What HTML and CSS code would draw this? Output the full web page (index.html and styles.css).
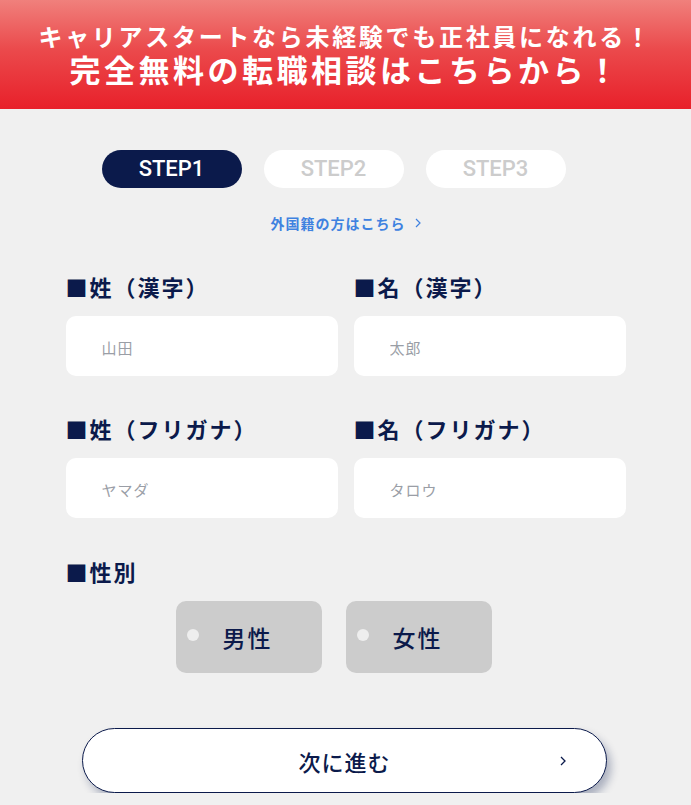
FILE: index.html
```html
<!DOCTYPE html>
<html lang="ja">
<head>
  <meta charset="UTF-8">
  <meta name="viewport" content="width=device-width, initial-scale=1.0">
  <title>無料転職相談</title>
  <link rel="stylesheet" href="styles.css">
</head>
<body>
  <header class="banner">
    <p class="banner-sub">キャリアスタートなら未経験でも正社員になれる！</p>
    <p class="banner-main">完全無料の転職相談はこちらから！</p>
  </header>

  <main class="form-wrap">
    <div class="steps">
      <span class="step active">STEP1</span>
      <span class="step">STEP2</span>
      <span class="step">STEP3</span>
    </div>

    <a class="foreign-link" href="#">外国籍の方はこちら
      <svg class="chev" width="6" height="10" viewBox="0 0 6 10"><path d="M1 1l4 4-4 4" fill="none" stroke="currentColor" stroke-width="1.2"/></svg>
    </a>

    <div class="fields">
      <div class="field">
        <label class="label">■姓（漢字）</label>
        <input class="input" type="text" placeholder="山田">
      </div>
      <div class="field">
        <label class="label">■名（漢字）</label>
        <input class="input" type="text" placeholder="太郎">
      </div>
      <div class="field">
        <label class="label">■姓（フリガナ）</label>
        <input class="input" type="text" placeholder="ヤマダ">
      </div>
      <div class="field">
        <label class="label">■名（フリガナ）</label>
        <input class="input" type="text" placeholder="タロウ">
      </div>
    </div>

    <div class="gender">
      <label class="label">■性別</label>
      <div class="radios">
        <label class="radio"><span class="dot"></span>男性</label>
        <label class="radio"><span class="dot"></span>女性</label>
      </div>
    </div>

    <button class="next" type="button">次に進む
      <svg class="next-arrow" width="8" height="12" viewBox="0 0 8 12"><path d="M2 2l4 4-4 4" fill="none" stroke="currentColor" stroke-width="1.3"/></svg>
    </button>
  </main>
</body>
</html>
```

FILE: styles.css
```css
* {
  margin: 0;
  padding: 0;
  box-sizing: border-box;
}

body {
  background-color: #f0f0f0;
  font-family: 'Noto Sans CJK JP', 'Noto Sans', sans-serif;
  color: #0b1a4b;
}

.banner {
  height: 109px;
  padding-top: 21px;
  background: linear-gradient(180deg, #f0807c 0%, #eb4a4c 45%, #e8202a 100%);
  color: white;
  text-align: center;
  font-weight: bold;
}

.banner-sub {
  font-size: 24px;
  line-height: 30px;
  letter-spacing: 2.7px;
}

.banner-main {
  font-size: 31px;
  line-height: 36px;
  letter-spacing: 3.5px;
}

.form-wrap {
  width: 560px;
  margin: 0 auto;
  display: flex;
  flex-direction: column;
}

.steps {
  display: flex;
  gap: 22px;
  margin-top: 41px;
  padding-left: 36px;
}

.step {
  width: 140px;
  height: 38px;
  border-radius: 19px;
  background-color: white;
  color: #cccccc;
  font-family: 'Roboto', sans-serif;
  font-weight: 500;
  font-size: 22px;
  line-height: 38px;
  text-align: center;
}

.step.active {
  background-color: #0b1a4b;
  color: white;
}

.foreign-link {
  display: flex;
  align-items: center;
  align-self: center;
  margin-top: 25px;
  color: #3f82e0;
  font-size: 14px;
  font-weight: bold;
  line-height: 20px;
  letter-spacing: 1px;
  text-decoration: none;
}

.chev {
  margin-left: 9px;
}

.fields {
  display: grid;
  grid-template-columns: 1fr 1fr;
  column-gap: 16px;
  row-gap: 38px;
  margin-top: 39px;
}

.label {
  display: block;
  font-size: 22px;
  font-weight: bold;
  line-height: 28px;
  letter-spacing: 2px;
  margin-bottom: 16px;
}

.input {
  display: block;
  width: 100%;
  height: 60px;
  border: none;
  border-radius: 10px;
  background-color: white;
  padding: 3px 0 0 36px;
  font-family: inherit;
  font-size: 15px;
  letter-spacing: 1px;
  outline: none;
}

.input::placeholder {
  color: #9a9ea6;
}

.gender {
  margin-top: 39px;
}

.gender .label {
  margin-bottom: 16px;
}

.radios {
  display: flex;
  justify-content: center;
  gap: 24px;
  padding-right: 24px;
}

.radio {
  display: flex;
  align-items: center;
  width: 146px;
  height: 72px;
  padding-left: 11px;
  border-radius: 10px;
  background-color: #cccccc;
  font-size: 23px;
  font-weight: 500;
  letter-spacing: 2px;
  cursor: pointer;
}

.dot {
  width: 12px;
  height: 12px;
  border-radius: 50%;
  background-color: #eeeeee;
  margin-right: 24px;
  margin-top: -4px;
}

.next {
  position: relative;
  align-self: center;
  width: 525px;
  height: 65px;
  margin-top: 55px;
  margin-left: -2px;
  border: 1px solid #0b1a4b;
  border-radius: 33px;
  background-color: white;
  box-shadow: 4px 6px 8px rgba(11, 26, 75, 0.3);
  color: #0b1a4b;
  font-family: inherit;
  font-size: 22px;
  font-weight: 500;
  letter-spacing: 1px;
  cursor: pointer;
}

.next-arrow {
  position: absolute;
  right: 39px;
  top: 50%;
  transform: translateY(-50%);
}
```
